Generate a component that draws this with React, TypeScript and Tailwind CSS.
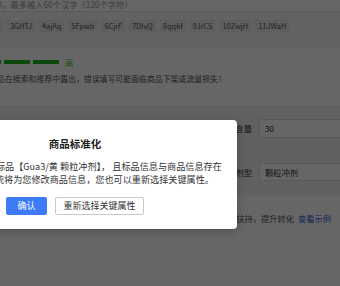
import React from "react";

const tags = ["3GHTJ", "4ajAq", "5Fpwb", "6CjrF", "7DIvQ", "8qqkf", "9JrCS", "10ZwjH", "11JWaH"];

export default function App() {
  return (
    <div className="relative w-[340px] h-[286px] overflow-hidden bg-white font-['Noto_Sans_CJK_SC','Microsoft_YaHei',sans-serif] text-[8.25px] text-[#555]">
      {/* name input */}
      <div className="h-[12px] border-b border-[#e0e0e0] flex items-end pb-[2px]">
        <span className="-ml-[6px] whitespace-nowrap leading-[9px] text-[#999]">
          称，最多输入60个汉字（120个字符）
        </span>
      </div>

      {/* tags */}
      <div className="h-[36px] bg-[#f6f6f6] pt-[8px]">
        <div className="flex gap-[4px] whitespace-nowrap">
          <div className="w-[30px] -ml-[27px] h-[12px] bg-[#ebebeb] shrink-0" />
          {tags.map((t) => (
            <div
              key={t}
              className="h-[12px] px-[3px] bg-[#ebebeb] text-[7.4px] leading-[12px] text-[#555] shrink-0"
            >
              {t}
            </div>
          ))}
        </div>
      </div>

      {/* strength */}
      <div className="flex items-center gap-[3px] mt-[9px] h-[10px]">
        <div className="w-[26px] -ml-[25px] h-[4px] bg-[#1fb41f]" />
        <div className="w-[26px] h-[4px] bg-[#1fb41f]" />
        <div className="w-[26px] h-[4px] bg-[#1fb41f]" />
        <span className="ml-[3px] leading-[10px] text-[#2fc82f]">高</span>
      </div>
      <div className="mt-[6px] whitespace-nowrap text-[7.9px] leading-[12px] -ml-[3px] text-[#555]">
        品在搜索和推荐中露出，错误填写可能面临商品下架或流量损失！
      </div>

      {/* attributes */}
      <div className="mt-[21px] border-t border-[#eaeaea] bg-[#f3f3f3] h-[90px] pt-[12px] flex flex-col gap-[25px]">
        <div className="flex items-center">
          <div className="w-[252px] shrink-0 text-right text-[#333] leading-[19px]">含量</div>
          <div className="ml-[7px] w-[120px] shrink-0 h-[19px] bg-white border border-[#dcdcdc] rounded-[2px] px-[5px] leading-[17px] text-[#333]">
            30
          </div>
        </div>
        <div className="flex items-center">
          <div className="w-[252px] shrink-0 text-right text-[#333] leading-[18px]">剂型</div>
          <div className="ml-[7px] w-[120px] shrink-0 h-[18px] bg-white border border-[#dcdcdc] rounded-[2px] px-[5px] leading-[16px] text-[#333]">
            颗粒冲剂
          </div>
        </div>
      </div>
      <div className="mt-[16px] flex justify-end pr-[9px] whitespace-nowrap leading-[12px] text-[#555]">
        优质商品可获得流量扶持，提升转化
        <span className="ml-[4px] text-[#2f5bd8]">查看示例</span>
      </div>

      {/* mask */}
      <div className="absolute inset-0 bg-black/60" />

      {/* dialog */}
      <div className="absolute left-[-87px] top-[120px] w-[324px] h-[109px] bg-white rounded-[4px] shadow-[0_2px_8px_rgba(0,0,0,0.25)] px-[18px] pt-[17px]">
        <div className="text-center text-[10.5px] font-bold leading-[14px] text-[#222]">
          商品标准化
        </div>
        <div className="mt-[9px] text-[9.13px] leading-[13px] text-[#333] whitespace-nowrap">
          <div className="ml-[1px]">该商品已匹配到标品【Gua3/黄 颗粒冲剂】， 且标品信息与商品信息存在</div>
          <div>差异，确认后系统将为您修改商品信息，您也可以重新选择关键属性。</div>
        </div>
        <div className="mt-[11px] flex justify-center gap-[8px]">
          <button className="w-[41px] h-[18px] bg-[#3e7bf6] text-white text-[9px] leading-[18px] rounded-[2px]">
            确认
          </button>
          <button className="w-[89px] h-[18px] bg-white border border-[#c8c8c8] text-[#333] text-[9px] leading-[16px] rounded-[2px]">
            重新选择关键属性
          </button>
        </div>
      </div>
    </div>
  );
}
